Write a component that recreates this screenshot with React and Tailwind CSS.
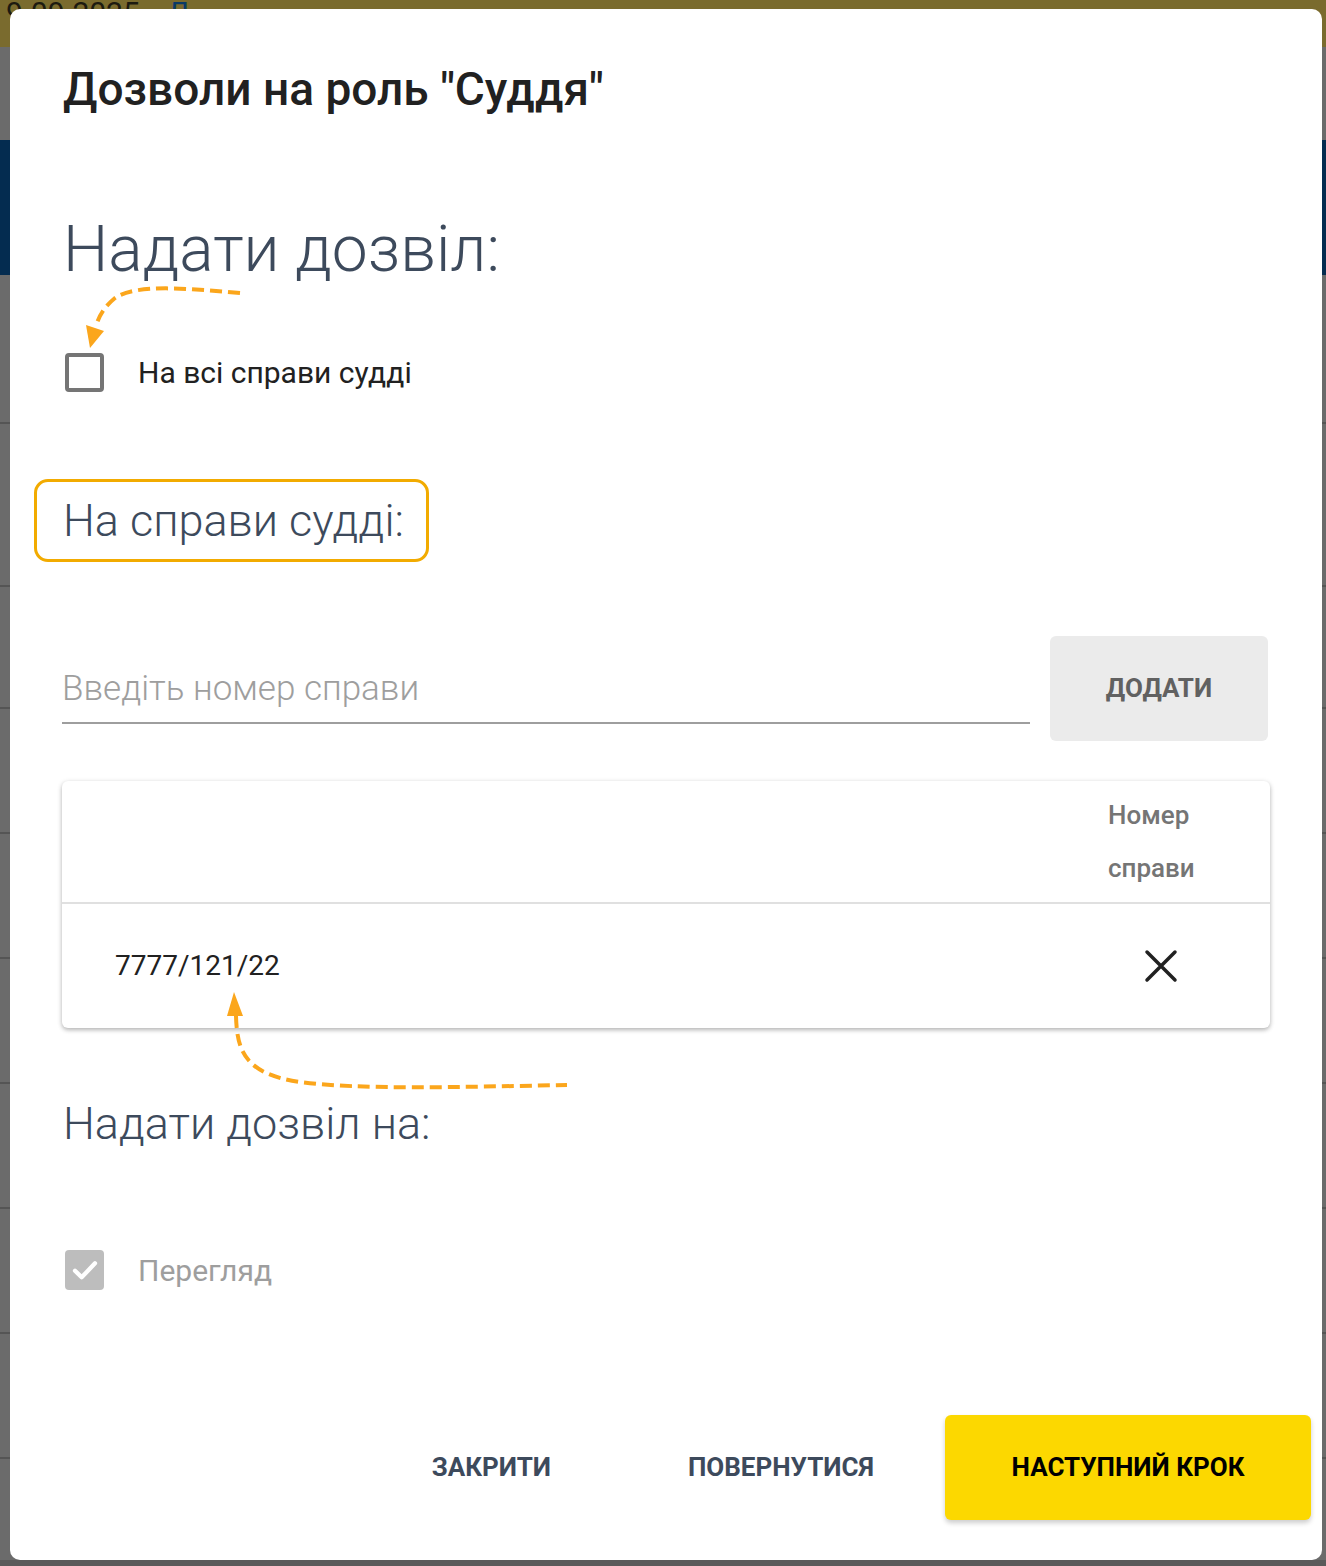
import React from 'react';

const rowLines = [422, 585, 707, 832, 957, 1082, 1207, 1332, 1457];

const Backdrop = () => (
  <div className="absolute inset-0 bg-[#6b6b6b] overflow-hidden">
    <div className="h-[47px] bg-[#7a6b2e] flex items-start pl-[6px] text-[30px] leading-[26px] text-[#1c1a10]">
      <span>9.09.2025</span>
      <span className="ml-[28px] text-[#0a3a66]">Л</span>
    </div>
    <div className="h-[93px]" />
    <div className="h-[135px] bg-[#042c50]" />
    {rowLines.map((y, i) => (
      <div key={i} className="h-[2px] bg-[#555555]" style={{ marginTop: i === 0 ? y - 275 : y - rowLines[i - 1] - 2 }} />
    ))}
    <div className="absolute bottom-0 left-0 right-0 h-[6px] bg-[#5a5a5a]" />
  </div>
);

const Arrows = () => (
  <svg className="absolute inset-0 pointer-events-none" width="1326" height="1566" viewBox="0 0 1326 1566">
    <g fill="none" stroke="#fba61c" strokeWidth="4" strokeDasharray="12 6">
      <path d="M 240 293 C 185 288, 135 284, 115 298 C 104 307, 99 316, 96 326" />
      <path d="M 236 1016 C 237 1050, 244 1074, 300 1082 C 360 1090, 460 1087, 567 1085" />
    </g>
    <polygon points="86,325 104,331 90,348" fill="#fba61c" />
    <polygon points="227,1016 243,1016 234,992" fill="#fba61c" />
  </svg>
);

const Heading = ({ children, className = '' }) => (
  <div className={`flex items-center font-light text-[#3d4a5c] ${className}`}>{children}</div>
);

export default function App() {
  return (
    <div className="relative w-[1326px] h-[1566px] overflow-hidden font-[Roboto,sans-serif]">
      <Backdrop />

      <div className="absolute left-[10px] top-[9px] w-[1312px] h-[1551px] bg-white rounded-[10px] flex flex-col pl-[53px] pr-[52px]">
        <div className="h-[80px] mt-[40px] flex items-center text-[46px] font-medium text-[#212121]">
          Дозволи на роль "Суддя"
        </div>

        <Heading className="h-[80px] mt-[81px] text-[64px]">Надати дозвіл:</Heading>

        <div className="h-[60px] mt-[52px] flex items-center">
          <div className="w-[39px] h-[39px] ml-[2px] border-4 border-[#757575] rounded-[4px]" />
          <span className="ml-[34px] text-[30px] text-[#212121]">На всі справи судді</span>
        </div>

        <div className="mt-[77px] -ml-[29px] w-fit h-[83px] pl-[26px] pr-[22px] border-[3px] border-[#f2ab00] rounded-[14px] flex items-center">
          <span className="text-[45px] font-light text-[#3d4a5c]">На справи судді:</span>
        </div>

        <div className="mt-[74px] flex items-start gap-[20px]">
          <input
            className="flex-1 -ml-[1px] h-[88px] pt-[18px] border-b-2 border-[#9e9e9e] outline-none text-[35px] font-light text-[#212121] placeholder:text-[#9e9e9e]"
            placeholder="Введіть номер справи"
          />
          <button className="w-[218px] h-[105px] mr-[2px] bg-[#ebebeb] rounded-[6px] text-[26px] font-bold text-[#616161]">
            ДОДАТИ
          </button>
        </div>

        <div className="mt-[40px] -ml-[1px] bg-white rounded-[6px] shadow-[0_2px_4px_rgba(0,0,0,0.25),0_1px_6px_rgba(0,0,0,0.08)]">
          <div className="h-[123px] flex border-b-2 border-[#e0e0e0]">
            <div className="flex-1" />
            <div className="w-[162px] flex flex-col justify-center text-[26px] font-medium text-[#757575] leading-[53px]">
              <span>Номер</span>
              <span>справи</span>
            </div>
          </div>
          <div className="h-[124px] flex items-center">
            <div className="flex-1 pl-[53px] text-[28px] text-[#212121]">7777/121/22</div>
            <div className="w-[162px] flex">
              <svg className="ml-[36px]" width="34" height="34" viewBox="0 0 34 34">
                <path d="M3 3 L31 31 M31 3 L3 31" stroke="#212121" strokeWidth="3.5" strokeLinecap="round" />
              </svg>
            </div>
          </div>
        </div>

        <Heading className="h-[60px] mt-[66px] text-[45px]">Надати дозвіл на:</Heading>

        <div className="h-[60px] mt-[86px] flex items-center">
          <div className="w-[39px] h-[40px] ml-[2px] bg-[#bdbdbd] rounded-[4px] flex items-center justify-center">
            <svg width="32" height="32" viewBox="0 0 24 24">
              <path d="M4.5 12.5 L9.5 17.5 L19.5 7" fill="none" stroke="white" strokeWidth="3.2" strokeLinecap="round" strokeLinejoin="round" />
            </svg>
          </div>
          <span className="ml-[34px] text-[30px] text-[#9e9e9e]">Перегляд</span>
        </div>

        <div className="mt-[115px] h-[105px] flex items-center justify-end -mr-[41px]">
          <button className="text-[26px] font-bold text-[#3d4a5c] mr-[137px]">ЗАКРИТИ</button>
          <button className="text-[26px] font-bold text-[#3d4a5c] mr-[71px]">ПОВЕРНУТИСЯ</button>
          <button className="w-[366px] h-[105px] bg-[#fcd800] rounded-[6px] text-[26px] font-bold text-black shadow-[0_3px_5px_rgba(0,0,0,0.2)]">
            НАСТУПНИЙ КРОК
          </button>
        </div>
      </div>

      <Arrows />
    </div>
  );
}
